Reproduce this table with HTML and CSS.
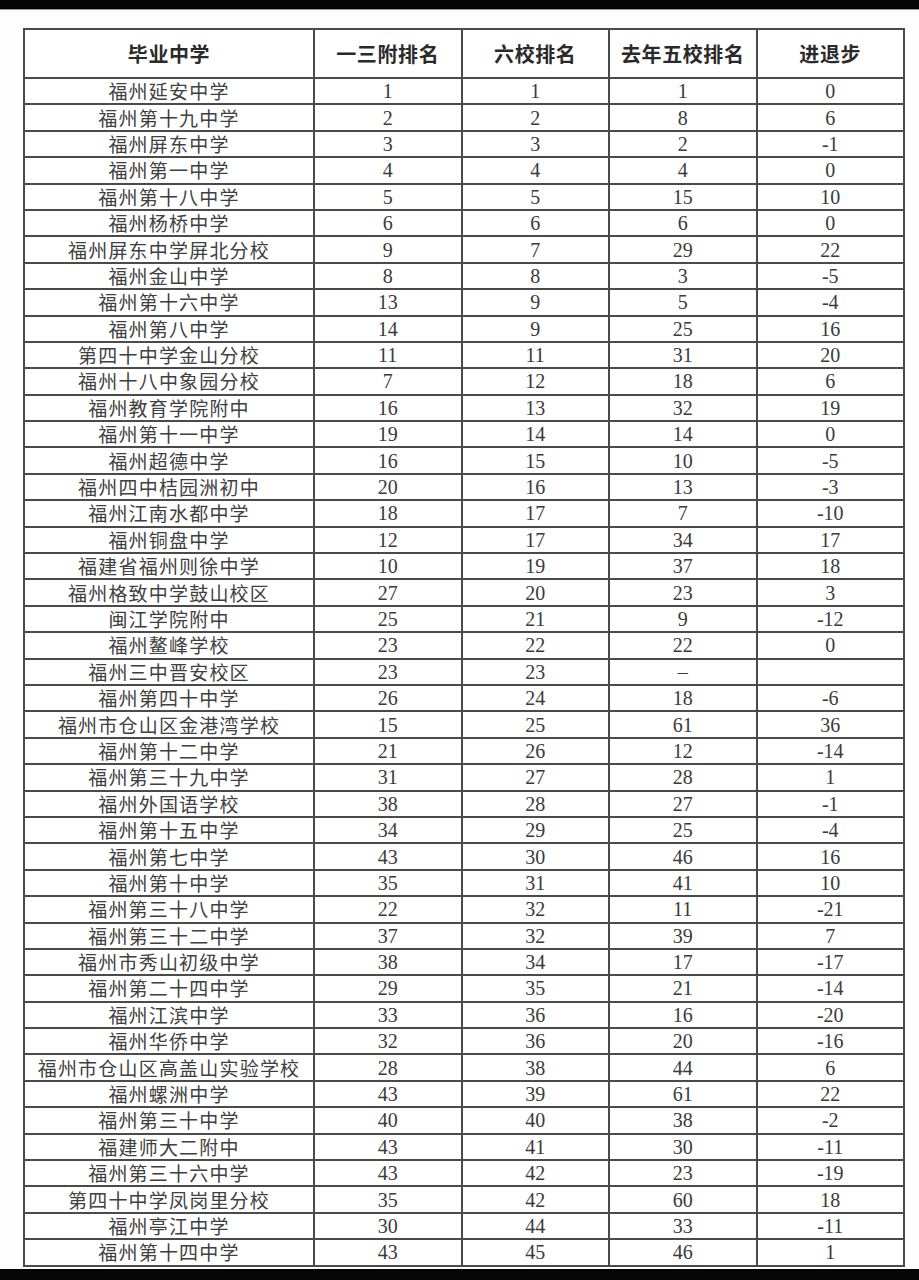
FILE: index.html
```html
<!DOCTYPE html>
<html lang="zh-CN">
<head>
<meta charset="utf-8">
<title>排名</title>
<link rel="stylesheet" href="styles.css">
</head>
<body>
<div class="page">
  <div class="bar bar-top"></div>
  <table class="rank">
    <colgroup>
      <col class="c-name"><col class="c-num"><col class="c-num"><col class="c-num"><col class="c-num">
    </colgroup>
    <thead>
      <tr><th>毕业中学</th><th>一三附排名</th><th>六校排名</th><th>去年五校排名</th><th>进退步</th></tr>
    </thead>
    <tbody>
      <tr><td>福州延安中学</td><td>1</td><td>1</td><td>1</td><td>0</td></tr>
      <tr><td>福州第十九中学</td><td>2</td><td>2</td><td>8</td><td>6</td></tr>
      <tr><td>福州屏东中学</td><td>3</td><td>3</td><td>2</td><td>-1</td></tr>
      <tr><td>福州第一中学</td><td>4</td><td>4</td><td>4</td><td>0</td></tr>
      <tr><td>福州第十八中学</td><td>5</td><td>5</td><td>15</td><td>10</td></tr>
      <tr><td>福州杨桥中学</td><td>6</td><td>6</td><td>6</td><td>0</td></tr>
      <tr><td>福州屏东中学屏北分校</td><td>9</td><td>7</td><td>29</td><td>22</td></tr>
      <tr><td>福州金山中学</td><td>8</td><td>8</td><td>3</td><td>-5</td></tr>
      <tr><td>福州第十六中学</td><td>13</td><td>9</td><td>5</td><td>-4</td></tr>
      <tr><td>福州第八中学</td><td>14</td><td>9</td><td>25</td><td>16</td></tr>
      <tr><td>第四十中学金山分校</td><td>11</td><td>11</td><td>31</td><td>20</td></tr>
      <tr><td>福州十八中象园分校</td><td>7</td><td>12</td><td>18</td><td>6</td></tr>
      <tr><td>福州教育学院附中</td><td>16</td><td>13</td><td>32</td><td>19</td></tr>
      <tr><td>福州第十一中学</td><td>19</td><td>14</td><td>14</td><td>0</td></tr>
      <tr><td>福州超德中学</td><td>16</td><td>15</td><td>10</td><td>-5</td></tr>
      <tr><td>福州四中桔园洲初中</td><td>20</td><td>16</td><td>13</td><td>-3</td></tr>
      <tr><td>福州江南水都中学</td><td>18</td><td>17</td><td>7</td><td>-10</td></tr>
      <tr><td>福州铜盘中学</td><td>12</td><td>17</td><td>34</td><td>17</td></tr>
      <tr><td>福建省福州则徐中学</td><td>10</td><td>19</td><td>37</td><td>18</td></tr>
      <tr><td>福州格致中学鼓山校区</td><td>27</td><td>20</td><td>23</td><td>3</td></tr>
      <tr><td>闽江学院附中</td><td>25</td><td>21</td><td>9</td><td>-12</td></tr>
      <tr><td>福州鳌峰学校</td><td>23</td><td>22</td><td>22</td><td>0</td></tr>
      <tr><td>福州三中晋安校区</td><td>23</td><td>23</td><td>–</td><td></td></tr>
      <tr><td>福州第四十中学</td><td>26</td><td>24</td><td>18</td><td>-6</td></tr>
      <tr><td>福州市仓山区金港湾学校</td><td>15</td><td>25</td><td>61</td><td>36</td></tr>
      <tr><td>福州第十二中学</td><td>21</td><td>26</td><td>12</td><td>-14</td></tr>
      <tr><td>福州第三十九中学</td><td>31</td><td>27</td><td>28</td><td>1</td></tr>
      <tr><td>福州外国语学校</td><td>38</td><td>28</td><td>27</td><td>-1</td></tr>
      <tr><td>福州第十五中学</td><td>34</td><td>29</td><td>25</td><td>-4</td></tr>
      <tr><td>福州第七中学</td><td>43</td><td>30</td><td>46</td><td>16</td></tr>
      <tr><td>福州第十中学</td><td>35</td><td>31</td><td>41</td><td>10</td></tr>
      <tr><td>福州第三十八中学</td><td>22</td><td>32</td><td>11</td><td>-21</td></tr>
      <tr><td>福州第三十二中学</td><td>37</td><td>32</td><td>39</td><td>7</td></tr>
      <tr><td>福州市秀山初级中学</td><td>38</td><td>34</td><td>17</td><td>-17</td></tr>
      <tr><td>福州第二十四中学</td><td>29</td><td>35</td><td>21</td><td>-14</td></tr>
      <tr><td>福州江滨中学</td><td>33</td><td>36</td><td>16</td><td>-20</td></tr>
      <tr><td>福州华侨中学</td><td>32</td><td>36</td><td>20</td><td>-16</td></tr>
      <tr><td>福州市仓山区高盖山实验学校</td><td>28</td><td>38</td><td>44</td><td>6</td></tr>
      <tr><td>福州螺洲中学</td><td>43</td><td>39</td><td>61</td><td>22</td></tr>
      <tr><td>福州第三十中学</td><td>40</td><td>40</td><td>38</td><td>-2</td></tr>
      <tr><td>福建师大二附中</td><td>43</td><td>41</td><td>30</td><td>-11</td></tr>
      <tr><td>福州第三十六中学</td><td>43</td><td>42</td><td>23</td><td>-19</td></tr>
      <tr><td>第四十中学凤岗里分校</td><td>35</td><td>42</td><td>60</td><td>18</td></tr>
      <tr><td>福州亭江中学</td><td>30</td><td>44</td><td>33</td><td>-11</td></tr>
      <tr><td>福州第十四中学</td><td>43</td><td>45</td><td>46</td><td>1</td></tr>
    </tbody>
  </table>
  <div class="bar bar-bottom"></div>
</div>
</body>
</html>
```

FILE: styles.css
```css
html, body {
  margin: 0;
  padding: 0;
  background: #ffffff;
}

.page {
  width: 919px;
  height: 1280px;
  display: flex;
  flex-direction: column;
  overflow: hidden;
  background: #fdfdfd;
}

.bar {
  background: #050505;
  flex: none;
}

.bar-top {
  height: 9px;
  border-bottom: 1px solid #9a9a9a;
}

.bar-bottom {
  height: 11px;
  margin-top: auto;
}

.rank {
  margin: 18px 0 0 23px;
  width: 880px;
  table-layout: fixed;
  border-collapse: collapse;
  border: 2px solid #1e1e1e;
  font-family: "Liberation Serif", "Noto Sans CJK SC", serif;
  color: #3a3a3a;
  background: #ffffff;
}

.c-name { width: 290px; }
.c-num { width: 147.5px; }

.rank th,
.rank td {
  border: 2px solid #4a4a4a;
  padding: 0;
  text-align: center;
  vertical-align: middle;
  white-space: nowrap;
  overflow: hidden;
}

.rank th {
  height: 47px;
  font-family: "Noto Sans CJK SC", sans-serif;
  font-weight: 700;
  font-size: 20px;
  letter-spacing: 0.6px;
  color: #2a2a2a;
}

.rank td {
  height: 24.4px;
  font-size: 20px;
  line-height: 22px;
}

.rank td:first-child {
  font-size: 19px;
  letter-spacing: 1.2px;
  font-family: "Noto Sans CJK SC", sans-serif;
  font-weight: 400;
  color: #404040;
}
```
